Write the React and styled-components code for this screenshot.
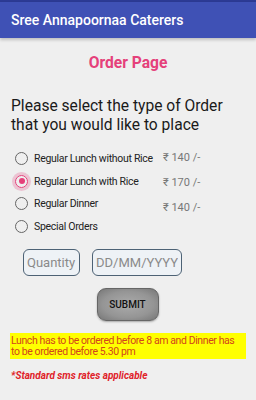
import React from 'react'
import styled, { createGlobalStyle } from 'styled-components'

const GlobalStyle = createGlobalStyle`
  html, body {
    margin: 0;
    padding: 0;
    background: #efefef;
    font-family: Roboto, "Noto Sans", sans-serif;
  }
`

const orders = [
    { label: 'Regular Lunch without Rice', price: '₹ 140 /-' },
    { label: 'Regular Lunch with Rice', price: '₹ 170 /-' },
    { label: 'Regular Dinner', price: '₹ 140 /-' },
    { label: 'Special Orders', price: null },
]

class App extends React.Component {
    constructor(props){
        super(props);
        this.state={
            selected: 1
        }
    }

    render() {
        return (
            <Page>
                <GlobalStyle />
                <StatusStrip />
                <AppBar>Sree Annapoornaa Caterers</AppBar>
                <Content>
                    <Heading>Order Page</Heading>
                    <Question>Please select the type of Order that you would like to place</Question>
                    <Choices>
                        <RadioList>
                        {
                            orders.map((item, index)=>{
                                return (
                                    <RadioRow key={index} onClick={()=>this.setState({selected: index})}>
                                        <Radio checked={this.state.selected === index} />
                                        <Label>{item.label}</Label>
                                    </RadioRow>
                                )
                            })
                        }
                        </RadioList>
                        <Prices>
                            {orders.filter(o => o.price).map((o, i)=> <Price key={i}>{o.price}</Price>)}
                        </Prices>
                    </Choices>
                    <Inputs>
                        <Field width={57} placeholder="Quantity" />
                        <Field width={90} placeholder="DD/MM/YYYY" />
                    </Inputs>
                    <ButtonRow>
                        <Submit>SUBMIT</Submit>
                    </ButtonRow>
                    <Notice>Lunch has to be ordered before 8 am and Dinner has <NoWrap>to be ordered</NoWrap> before 5.30 pm</Notice>
                    <Rates>*Standard sms rates applicable</Rates>
                </Content>
            </Page>
        )
    }
}

const Page = styled.div`
    width: 256px;
    height: 400px;
    overflow: hidden;
    background: #efefef;
`

const StatusStrip = styled.div`
    height: 2px;
    background: #2c3a94;
`

const AppBar = styled.div`
    height: 36px;
    background: #3f51b5;
    color: #fff;
    font-size: 14px;
    font-weight: 500;
    display: flex;
    align-items: center;
    padding-left: 11px;
    box-shadow: 0 2px 3px rgba(0,0,0,0.2);
`

const Content = styled.div`
    padding: 0 10px;
`

const Heading = styled.div`
    color: #e5407a;
    font-size: 15.6px;
    font-weight: 700;
    text-align: center;
    margin-top: 15px;
    height: 20px;
    line-height: 20px;
`

const Question = styled.div`
    color: #1a1a1a;
    font-size: 15.6px;
    line-height: 19px;
    margin-top: 24px;
    padding-left: 1px;
    width: 240px;
`

const Choices = styled.div`
    display: flex;
    margin-top: 17px;
`

const RadioList = styled.div`
    display: flex;
    flex-direction: column;
    gap: 9.5px;
    padding-left: 5px;
    width: 146px;
`

const RadioRow = styled.div`
    display: flex;
    align-items: center;
    height: 13px;
`

const Radio = styled.span`
    width: 13px;
    height: 13px;
    box-sizing: border-box;
    border-radius: 50%;
    border: 1.5px solid ${(props)=>props.checked ? '#e5407a' : '#666'};
    display: flex;
    align-items: center;
    justify-content: center;
    flex-shrink: 0;
    &::after {
        content: '';
        width: 6px;
        height: 6px;
        border-radius: 50%;
        background: #e5407a;
        display: ${(props)=>props.checked ? 'block' : 'none'};
    }
    ${(props)=>props.checked && 'box-shadow: 0 0 0 3px rgba(229,64,122,0.25);'}
`

const Label = styled.span`
    font-size: 10.5px;
    letter-spacing: -0.3px;
    color: #222;
    margin-left: 6px;
    white-space: nowrap;
`

const Prices = styled.div`
    display: flex;
    flex-direction: column;
    gap: 12px;
    padding-left: 2px;
    margin-top: -1px;
`

const Price = styled.span`
    font-size: 11px;
    color: #777;
    height: 13px;
    line-height: 13px;
`

const Inputs = styled.div`
    display: flex;
    gap: 12px;
    padding-left: 13px;
    margin-top: 16px;
`

const Field = styled.input`
    width: ${(props)=>props.width}px;
    height: 27px;
    box-sizing: border-box;
    border: 1.5px solid #4d6275;
    border-radius: 6px;
    background: #eef2f6;
    font-family: Roboto, sans-serif;
    font-size: 13px;
    padding: 0 3px;
    color: #333;
    &::placeholder {
        color: #8a8a8a;
    }
`

const ButtonRow = styled.div`
    display: flex;
    justify-content: center;
    padding-right: 1px;
    margin-top: 12px;
`

const Submit = styled.button`
    width: 62px;
    height: 33px;
    border: 1px solid #666;
    border-radius: 9px;
    background: radial-gradient(ellipse at center, #ababab 0%, #959595 60%, #767676 100%);
    color: #111;
    font-family: Roboto, sans-serif;
    font-size: 10px;
    font-weight: 500;
    box-shadow: 0 1px 2px rgba(0,0,0,0.3);
`

const Notice = styled.div`
    background: #ffff00;
    color: #d2451c;
    font-size: 10.5px;
    letter-spacing: -0.4px;
    line-height: 11px;
    padding: 2px 4px 2px 1px;
    margin-top: 12px;
`

const NoWrap = styled.span`
    white-space: nowrap;
`

const Rates = styled.div`
    color: #e0222a;
    font-size: 10px;
    font-weight: 700;
    font-style: italic;
    margin-top: 11px;
    padding-left: 1px;
`

export default App;
